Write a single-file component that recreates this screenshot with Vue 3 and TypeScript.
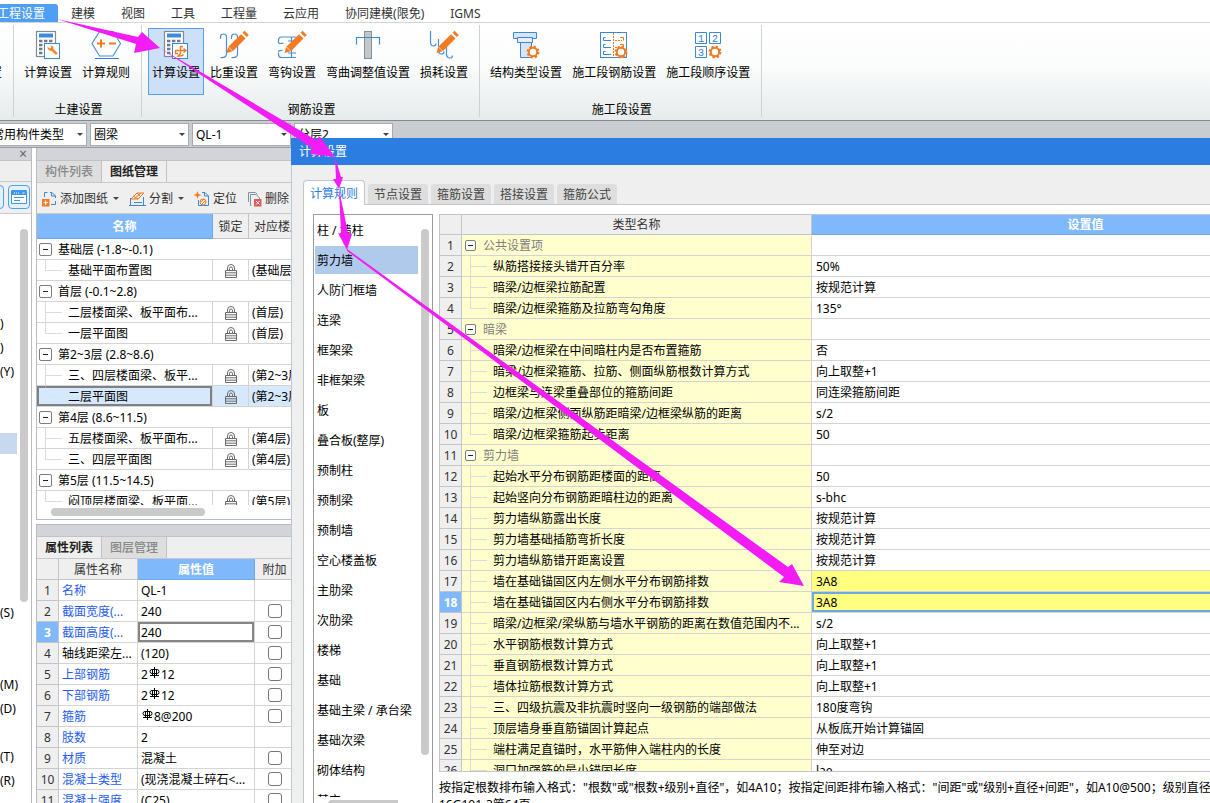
<script setup lang="ts">
import { ref } from 'vue'

interface TreeRow { kind: 'group' | 'leaf'; name: string; floor?: string; last?: boolean; active?: boolean }
interface PropRow { name: string; value: string; rebar?: 'mid' | 'start'; check: boolean; link: boolean; active?: boolean }
interface RuleRow { name: string; value: string; group?: boolean; last?: boolean; mark?: boolean; current?: boolean }

const menus: string[] = ['工程设置', '建模', '视图', '工具', '工程量', '云应用', '协同建模(限免)', 'IGMS']

const ribbon = [
  { label: '土建设置', items: [{ t: '计算设置', i: 'calcWrench' }, { t: '计算规则', i: 'rule' }] },
  {
    label: '钢筋设置',
    items: [
      { t: '计算设置', i: 'calcBar', on: true },
      { t: '比重设置', i: 'weight' },
      { t: '弯钩设置', i: 'hook' },
      { t: '弯曲调整值设置', i: 'bend' },
      { t: '损耗设置', i: 'loss' },
    ],
  },
  {
    label: '施工段设置',
    items: [{ t: '结构类型设置', i: 'struct' }, { t: '施工段钢筋设置', i: 'segment' }, { t: '施工段顺序设置', i: 'order' }],
  },
] as { label: string; items: { t: string; i: string; on?: boolean }[] }[]

const combos: { text: string; label: string }[] = [
  { text: '常用构件类型', label: '构件类型' },
  { text: '圈梁', label: '构件' },
  { text: 'QL-1', label: '名称' },
  { text: '分层2', label: '分层' },
]

const navRows: string[] = ['', '', '', '', ')', ')', '(Y)', '', '', '', '', '', '', '', '', '', '(S)', '', '', '(M)', '(D)', '', '(T)', '(R)']

const tree: TreeRow[] = [
  { kind: 'group', name: '基础层 (-1.8~-0.1)' },
  { kind: 'leaf', name: '基础平面布置图', floor: '(基础层)', last: true },
  { kind: 'group', name: '首层 (-0.1~2.8)' },
  { kind: 'leaf', name: '二层楼面梁、板平面布...', floor: '(首层)' },
  { kind: 'leaf', name: '一层平面图', floor: '(首层)', last: true },
  { kind: 'group', name: '第2~3层 (2.8~8.6)' },
  { kind: 'leaf', name: '三、四层楼面梁、板平...', floor: '(第2~3层)' },
  { kind: 'leaf', name: '二层平面图', floor: '(第2~3层)', last: true, active: true },
  { kind: 'group', name: '第4层 (8.6~11.5)' },
  { kind: 'leaf', name: '五层楼面梁、板平面布...', floor: '(第4层)' },
  { kind: 'leaf', name: '三、四层平面图', floor: '(第4层)', last: true },
  { kind: 'group', name: '第5层 (11.5~14.5)' },
  { kind: 'leaf', name: '闷顶层楼面梁、板平面...', floor: '(第5层)', last: true },
]

const props: PropRow[] = [
  { name: '名称', value: 'QL-1', check: false, link: true },
  { name: '截面宽度(...', value: '240', check: true, link: true },
  { name: '截面高度(...', value: '240', check: true, link: true, active: true },
  { name: '轴线距梁左...', value: '(120)', check: true, link: false },
  { name: '上部钢筋', value: '12', rebar: 'mid', check: true, link: true },
  { name: '下部钢筋', value: '12', rebar: 'mid', check: true, link: true },
  { name: '箍筋', value: '8@200', rebar: 'start', check: true, link: true },
  { name: '肢数', value: '2', check: false, link: true },
  { name: '材质', value: '混凝土', check: true, link: true },
  { name: '混凝土类型', value: '(现浇混凝土碎石<...', check: true, link: true },
  { name: '混凝土强度', value: '(C25)', check: true, link: true },
]

const dialogTabs: string[] = ['计算规则', '节点设置', '箍筋设置', '搭接设置', '箍筋公式']
const activeTab = ref(0)

const categories: string[] = [
  '柱 / 墙柱', '剪力墙', '人防门框墙', '连梁', '框架梁', '非框架梁', '板', '叠合板(整厚)', '预制柱', '预制梁',
  '预制墙', '空心楼盖板', '主肋梁', '次肋梁', '楼梯', '基础', '基础主梁 / 承台梁', '基础次梁', '砌体结构', '其它',
]
const activeCategory = ref(1)

const rules: RuleRow[] = [
  { name: '公共设置项', value: '', group: true },
  { name: '纵筋搭接接头错开百分率', value: '50%' },
  { name: '暗梁/边框梁拉筋配置', value: '按规范计算' },
  { name: '暗梁/边框梁箍筋及拉筋弯勾角度', value: '135°', last: true },
  { name: '暗梁', value: '', group: true },
  { name: '暗梁/边框梁在中间暗柱内是否布置箍筋', value: '否' },
  { name: '暗梁/边框梁箍筋、拉筋、侧面纵筋根数计算方式', value: '向上取整+1' },
  { name: '边框梁与连梁重叠部位的箍筋间距', value: '同连梁箍筋间距' },
  { name: '暗梁/边框梁侧面纵筋距暗梁/边框梁纵筋的距离', value: 's/2' },
  { name: '暗梁/边框梁箍筋起步距离', value: '50', last: true },
  { name: '剪力墙', value: '', group: true },
  { name: '起始水平分布钢筋距楼面的距离', value: '50' },
  { name: '起始竖向分布钢筋距暗柱边的距离', value: 's-bhc' },
  { name: '剪力墙纵筋露出长度', value: '按规范计算' },
  { name: '剪力墙基础插筋弯折长度', value: '按规范计算' },
  { name: '剪力墙纵筋错开距离设置', value: '按规范计算' },
  { name: '墙在基础锚固区内左侧水平分布钢筋排数', value: '3A8', mark: true },
  { name: '墙在基础锚固区内右侧水平分布钢筋排数', value: '3A8', mark: true, current: true },
  { name: '暗梁/边框梁/梁纵筋与墙水平钢筋的距离在数值范围内不...', value: 's/2' },
  { name: '水平钢筋根数计算方式', value: '向上取整+1' },
  { name: '垂直钢筋根数计算方式', value: '向上取整+1' },
  { name: '墙体拉筋根数计算方式', value: '向上取整+1' },
  { name: '三、四级抗震及非抗震时竖向一级钢筋的端部做法', value: '180度弯钩' },
  { name: '顶层墙身垂直筋锚固计算起点', value: '从板底开始计算锚固' },
  { name: '端柱满足直锚时，水平筋伸入端柱内的长度', value: '伸至对边' },
  { name: '洞口加强筋的最小锚固长度', value: 'lae' },
]
</script>

<template>
  <div class="app">
    <nav class="menu" aria-label="主菜单">
      <button v-for="(m, i) in menus" :key="m" type="button" :class="['menu-item', { on: i === 0 }]">{{ m }}</button>
    </nav>

    <header class="ribbon">
      <div class="stub"><span>置</span></div>
      <section v-for="g in ribbon" :key="g.label" class="group">
        <div class="group-items">
          <button v-for="b in g.items" :key="b.i" type="button" :class="['tool', { on: b.on }]">
            <svg width="30" height="30" viewBox="0 0 30 30" fill="none" aria-hidden="true">
              <template v-if="b.i === 'calcWrench' || b.i === 'calcBar'">
                <rect x="3.500" y="1.500" width="19" height="25" fill="#fff" stroke="#7c8b94" stroke-width="1.200" />
                <rect x="6" y="3.500" width="14" height="4" fill="#3d8be0" />
                <path d="M6 11h14M6 15h14M6 19h6M6 23h6" stroke="#6d7c86" stroke-width="2.600" stroke-dasharray="3.400 1.600" />
                <rect x="11.500" y="13.500" width="15" height="15" fill="#fff" stroke="#3d87d6" />
                <path v-if="b.i === 'calcWrench'" d="M14.500 16.500l2.300 2.300 1.800-1.900-1.300-1.300c2-.5 3.700 1 3.200 3.300l4.200 4.300-1.700 1.800-4.400-4.300c-2.300.5-4.500-1.500-4.100-4.200z" fill="#f0852a" />
                <g v-else stroke="#f27a22" stroke-width="1.400">
                  <path d="M19.500 16v7.500M19.500 16.500h2.500M14 20.500h10.500M14.500 20.500v3h2.500M19.500 23.500l-2.500 2.500h2.500" />
                  <path d="M22.500 18.500l2.500 2-2.500 2M22.500 24.500q-1 1.500-3 1.500" />
                </g>
              </template>
              <template v-else-if="b.i === 'rule'">
                <path d="M8.500 1.500h13.500l7.500 12-7.500 12.500H8.500l-7.500-12.500z" stroke="#4b8fdc" stroke-width="1.200" />
                <path d="M6 13.500h8M10 9.500v8M18 13.500h7" stroke="#f27a22" stroke-width="2" />
                <path d="M4 28.500h24" stroke="#2f80dc" />
              </template>
              <template v-else-if="b.i === 'weight'">
                <path d="M1.500 9V7q0-3 3-3t3 3v17q0 4-6 3.500M12.500 9V7q0-3 3-3t3 3v17q0 4-6 3.500" stroke="#4b8fdc" stroke-width="1.200" />
              </template>
              <template v-else-if="b.i === 'hook'">
                <path d="M1.500 13V10q0-3 3-3H19M19 27.500H4.500q-3 0-3-3v-2M1.500 22q0-2 4-1.500M1.500 13q2 1 5 0M14.500 7v20.500M11 11h8M11 23h8" stroke="#4b8fdc" stroke-width="1.200" />
              </template>
              <template v-else-if="b.i === 'bend'">
                <rect x="11.500" y="1.500" width="7" height="27" fill="#c3c7ca" stroke="#84919a" />
                <path d="M3.500 14.500v-7h23v7" stroke="#3d87d6" stroke-width="1.200" />
              </template>
              <template v-else-if="b.i === 'loss'">
                <path d="M1.500 1v11q0 4 3 4 2.500 0 2.500-2.500M9.500 9v11q0 4 3 4 2.500 0 2.500-2.500M17.500 12v12q0 4 3.500 4 2.500 0 2.500-2.500" stroke="#4b8fdc" stroke-width="1.200" />
              </template>
              <template v-else-if="b.i === 'struct'">
                <path d="M9.500 12.500h11v15h-11z" fill="#d6e6f8" stroke="#3d87d6" />
                <path d="M2.500 2.500h23v6h-23z" fill="#d6e6f8" stroke="#3d87d6" />
                <path d="M6.500 7.500h15v5h-15z" fill="#e4effb" stroke="#3d87d6" />
              </template>
              <template v-else-if="b.i === 'segment'">
                <rect x="1.500" y="2.500" width="26" height="25" stroke="#3d87d6" />
                <path d="M6.500 7.500H4.500v3H12M6.500 14.500H4.500v3H12M6.500 21.500H4.500v3H12" stroke="#3d87d6" />
                <path d="M14.500 3v24M16 10.500h7M16 17.500h5" stroke="#f27a22" stroke-dasharray="2 1" />
                <path d="M21 7.500h3.500v3M21 14.500h3.500v2" stroke="#f27a22" />
              </template>
              <template v-else-if="b.i === 'order'">
                <path d="M2.500 2.500h11v11h-11zM16.500 2.500h11v11h-11zM2.500 16.500h11v11h-11z" stroke="#3d87d6" />
                <text class="digit" x="5" y="12">1</text>
                <text class="digit" x="19" y="12">2</text>
                <text class="digit" x="5" y="26">3</text>
              </template>
              <g v-if="['weight', 'hook', 'loss'].includes(b.i)">
                <path d="M7.500 23l1.800-6.200L22 4.200l4.500 4.300L13.800 21.200z" fill="#f27a22" />
                <path d="M23.500 2.800l2-2 4.300 4.300-2 2z" fill="#f27a22" />
                <path d="M9.300 16.800l4.500 4.400" stroke="#fff" stroke-width=".7" />
              </g>
              <g v-if="['struct', 'segment', 'order'].includes(b.i)">
                <circle cx="22" cy="22" r="5.500" fill="#fff" stroke="#f27a22" stroke-width="2" stroke-dasharray="2.300 2.020" />
                <circle cx="22" cy="22" r="4.200" fill="#fff" stroke="#f27a22" stroke-width="2" />
              </g>
            </svg>
            <span>{{ b.t }}</span>
          </button>
        </div>
        <div class="group-label">{{ g.label }}</div>
      </section>
    </header>

    <div class="combos">
      <label v-for="c in combos" :key="c.label" class="combo">
        <select :aria-label="c.label"><option>{{ c.text }}</option></select>
      </label>
    </div>

    <main class="work">
      <aside class="nav">
        <div class="nav-top"><button type="button" class="close" aria-label="关闭">×</button></div>
        <div class="nav-gap"></div>
        <div class="nav-tools">
          <button type="button" class="view" aria-label="列表视图"></button>
          <button type="button" class="view" aria-label="窗口视图">
            <svg width="16" height="14" viewBox="0 0 16 14" aria-hidden="true">
              <path d="M.5.500h15v13H.500z" fill="#fff" stroke="#3f96ee" />
              <path d="M1 1h14v4H1z" fill="#3f96ee" />
              <path d="M3 3h1M5 3h1M7 3h1M11.500 3h2" stroke="#fff" />
              <path d="M3 7.500h10M3 10.500h6" stroke="#3f96ee" />
            </svg>
          </button>
        </div>
        <div class="nav-body">
          <ul class="nav-list">
            <li v-for="(n, i) in navRows" :key="i"><span :class="{ sel: i === 9 }">{{ n }}</span></li>
          </ul>
          <div class="vbar"></div>
        </div>
      </aside>

      <div class="dock">
        <section class="panel drawings">
          <div class="strip"></div>
          <div class="ptabs">
            <button type="button">构件列表</button>
            <button type="button" class="on">图纸管理</button>
          </div>
          <div class="ptools">
            <button type="button">
              <svg width="16" height="16" viewBox="0 0 16 16" fill="none" aria-hidden="true">
                <path d="M3.500 6V1.500h3M9 1.500h2l3.500 3.500v2M14.500 10v3.500H10M10.500 1.500V5h4" stroke="#3d87d6" />
                <rect x="1" y="8" width="7.500" height="7.500" fill="#f27a22" /><path d="M2.500 11.700h4.500M4.700 9.500V14" stroke="#fff" />
              </svg>
              添加图纸<i class="caret"></i>
            </button>
            <button type="button">
              <svg width="17" height="16" viewBox="0 0 17 16" fill="none" aria-hidden="true">
                <path d="M1.500 7v7.500h13V6M0 14.500h2M14 14.500h3M5 11.500h8" stroke="#3d87d6" />
                <path d="M2 8L8 2h7L9 8zM5 8l7-6M4 5l5 3M8 2l4 4" stroke="#f27a22" />
              </svg>
              分割<i class="caret"></i>
            </button>
            <button type="button">
              <svg width="16" height="16" viewBox="0 0 16 16" fill="none" aria-hidden="true">
                <path d="M8 1.500h3l3.500 3.500v9.500h-10V9M10.500 1.500V5h4" stroke="#3d87d6" />
                <path d="M3.500 0l1 3 3 1-3 1-1 3-1-3-3-1 3-1z" fill="#f27a22" />
                <circle cx="9" cy="11" r="3" stroke="#f27a22" /><path d="M7 11l3-3M8 13l3-3" stroke="#f27a22" />
              </svg>
              定位
            </button>
            <button type="button">
              <svg width="15" height="16" viewBox="0 0 15 16" fill="none" aria-hidden="true">
                <path d="M1.500 11V1.500h7l2 2M4.500 14.500h-1v-11h5.500l3.500 3.500v1" stroke="#8090a0" />
                <rect x="7" y="8" width="7.500" height="7.500" fill="#dd5b5b" /><path d="M9 10l3.500 3.500M12.500 10L9 13.500" stroke="#fff" />
              </svg>
              删除
            </button>
          </div>
          <div class="tree-wrap">
            <table class="grid tree">
              <colgroup><col class="w-name" /><col class="w-lock" /><col /></colgroup>
              <thead><tr><th class="hot">名称</th><th>锁定</th><th class="left">对应楼层</th></tr></thead>
              <tbody>
                <tr v-for="(r, i) in tree" :key="i" :class="{ active: r.active }">
                  <td v-if="r.kind === 'group'" colspan="3" class="flush"><div class="node"><i class="box big"></i><span>{{ r.name }}</span></div></td>
                  <template v-else>
                    <td class="flush"><div class="node"><i :class="['elbow', { last: r.last }]"></i><span>{{ r.name }}</span></div></td>
                    <td class="lock">
                      <svg width="12" height="14" viewBox="0 0 12 14" fill="none" stroke="#6a6a6a" aria-hidden="true">
                        <path d="M2.500 6.500V4q0-3.500 3.500-3.500T9.500 4v2.500M4.500 6.500V4.500Q4.500 3 6 3t1.500 1.500v2" />
                        <path d="M.5 6.500h11v7H.500zM.500 8.800h11M.500 11.200h11" />
                      </svg>
                    </td>
                    <td class="floor">{{ r.floor }}</td>
                  </template>
                </tr>
              </tbody>
            </table>
          </div>
          <div class="hbar-row"><div class="hbar"></div></div>
        </section>

        <section class="panel props">
          <div class="strip"></div>
          <div class="ptabs">
            <button type="button" class="on">属性列表</button>
            <button type="button">图层管理</button>
          </div>
          <table class="grid prop">
            <colgroup><col class="w-no" /><col class="w-key" /><col class="w-val" /><col /></colgroup>
            <thead><tr><th></th><th>属性名称</th><th class="hot">属性值</th><th>附加</th></tr></thead>
            <tbody>
              <tr v-for="(p, i) in props" :key="p.name" :class="{ cur: p.active }">
                <td class="no">{{ i + 1 }}</td>
                <td :class="['key', { link: p.link }]">{{ p.name }}</td>
                <td class="val">
                  <template v-if="p.rebar"><template v-if="p.rebar === 'mid'">2</template><svg class="rebar" width="13" height="12" viewBox="0 0 13 12" fill="none" stroke="#000" aria-hidden="true"><path d="M6.500 0v11M2 8.500h9M4 2.500h5q2 0 2 2t-2 2H4q-2 0-2-2t2-2zM4.500 2v6M8.500 2v6" /></svg></template>{{ p.value }}
                </td>
                <td class="add"><input v-if="p.check" type="checkbox" :aria-label="p.name + ' 附加'" /></td>
              </tr>
            </tbody>
          </table>
        </section>
      </div>
    </main>

    <section class="dialog" role="dialog" aria-labelledby="dlg-title">
      <h1 id="dlg-title" class="title">计算设置</h1>
      <div class="dtabs" role="tablist">
        <button v-for="(t, i) in dialogTabs" :key="t" type="button" role="tab" :aria-selected="i === activeTab" :class="{ on: i === activeTab }" @click="activeTab = i">{{ t }}</button>
      </div>
      <div class="pane">
        <div class="cats">
          <ul>
            <li v-for="(c, i) in categories" :key="c">
              <button type="button" :class="{ on: i === activeCategory }" @click="activeCategory = i">{{ c }}</button>
            </li>
          </ul>
          <div class="cats-v"></div>
          <div class="cats-h"></div>
        </div>
        <div class="right">
          <div class="rules-wrap">
            <table class="grid rules">
              <colgroup><col class="w-rno" /><col class="w-rname" /><col class="w-rval" /></colgroup>
              <thead><tr><th></th><th>类型名称</th><th class="hot">设置值</th></tr></thead>
              <tbody>
                <tr v-for="(r, i) in rules" :key="i" :class="{ cur: r.current }">
                  <td class="no">{{ i + 1 }}</td>
                  <td class="rname flush">
                    <div :class="['node', { grp: r.group }]"><i v-if="r.group" class="box"></i><i v-else :class="['elbow', { last: r.last }]"></i><span>{{ r.name }}</span></div>
                  </td>
                  <td :class="['rval', { mark: r.mark }]">{{ r.value }}</td>
                </tr>
              </tbody>
            </table>
          </div>
          <p class="hint">按指定根数排布输入格式："根数"或"根数+级别+直径"，如4A10；按指定间距排布输入格式："间距"或"级别+直径+间距"，如A10@500；级别直径<br />16G101-3第64页</p>
        </div>
      </div>
    </section>

    <svg class="arrows" width="820" height="600" viewBox="0 0 820 600" fill="#f31cf7" aria-hidden="true">
      <path d="M57 19L138 37 142 32 160 48 134 53 136 44z" />
      <path d="M160 48L289 124 316 140 320 137 335 157 310 154 312 148 277 125z" />
      <path d="M335 157L341 177 343 177 339 189 333 179 336 179z" />
      <path d="M339 189L348 233 352 234 347 250 338 233 341 234z" />
      <path d="M347 249L788 567 792 564 804 586 779 582 784 577 347 251z" />
    </svg>
  </div>
</template>

<style>
html, body { margin: 0; overflow: hidden; }
</style>

<style scoped>
.app { position: relative; display: flex; flex-direction: column; height: 100vh; overflow: hidden; background: #fff; color: #000; font: 12px/20px "Noto Sans", "Noto Sans CJK SC", sans-serif; }
.app *, .app *::before { box-sizing: border-box; }
button, select, input { font: inherit; color: inherit; margin: 0; }
button { border: 0; padding: 0; background: none; white-space: nowrap; }
ul, p, h1 { margin: 0; padding: 0; list-style: none; }

.menu { flex: none; display: flex; align-items: flex-end; height: 23px; margin-left: -16px; border-bottom: 1px solid #d5d5d5; color: #333; }
.menu-item { height: 18px; padding: 2px 13px 0; line-height: 16px; }
.menu-item.on { background: #4f9ff5; color: #fff; border-radius: 0 3px 0 0; }

.ribbon { flex: none; display: flex; height: 98px; padding-top: 2px; overflow: hidden; border-bottom: 1px solid #85898e; background: linear-gradient(#fff 0%, #fbfcfc 45%, #e6ebeb 100%); }
.stub { display: flex; justify-content: flex-end; width: 14px; height: 92px; padding: 38px 11px 0 0; border-right: 1px solid #cfd2d3; }
.group { display: flex; flex-direction: column; height: 92px; padding: 3px 7px 0 6px; border-right: 1px solid #cfd2d3; }
.group-items { display: flex; gap: 2px; height: 67px; }
.tool { display: flex; flex-direction: column; align-items: center; justify-content: flex-start; gap: 4px; height: 67px; padding: 1px 3px 0; border: 1px solid transparent; line-height: 18px; }
.tool svg { flex: none; }
.tool.on { border-color: #5a9fe8; background: #cce1f9; }
.group-label { margin-top: 6px; padding-left: 3px; text-align: center; line-height: 18px; }
.digit { font: 10px "Liberation Mono", monospace; fill: #2f80dc; }

.combos { flex: none; display: flex; gap: 3px; height: 27px; margin-left: -12px; padding-top: 2px; background: #c9ccd0; border-bottom: 1px solid #989ca1; }
.combo { position: relative; width: 99px; height: 23px; }
.combo select { display: block; width: 100%; height: 100%; padding: 0 3px; border: 1px solid #a7abb0; border-radius: 0; background: #fff; appearance: none; }
.combo::after { content: ""; position: absolute; right: 4px; top: 10px; border: 3px solid transparent; border-top-color: #444; border-bottom: 0; }

.work { flex: 1; display: flex; min-height: 0; }
.nav { flex: none; display: flex; flex-direction: column; width: 32px; overflow: hidden; border-right: 1px solid #b9bbc0; }
.nav-top { flex: none; display: flex; justify-content: flex-end; height: 13px; padding-right: 4px; background: #d2d4da; border-bottom: 1px solid #c0c2c8; }
.close { font-size: 14px; line-height: 12px; color: #666; }
.nav-gap { flex: none; height: 21px; background: #efefef; border-bottom: 1px solid #c8cacf; }
.nav-tools { flex: none; display: flex; gap: 4px; height: 32px; padding-top: 3px; margin-left: -18px; background: #efefef; border-bottom: 1px solid #c8cacf; }
.view { flex: none; display: flex; align-items: center; justify-content: center; width: 22px; height: 24px; border: 1px solid #4fa0f0; border-radius: 4px; background: #e3f0fd; }
.nav-body { flex: 1; display: flex; min-height: 0; padding-top: 2px; }
.nav-list { width: 17px; white-space: nowrap; line-height: 24px; }
.nav-list li { height: 24px; }
.nav-list span { display: block; height: 24px; line-height: 23px; }
.nav-list .sel { height: 21px; margin-top: 1px; background: #c8d8ef; }
.vbar { width: 8px; height: 373px; margin: 13px 0 0 3px; border-radius: 4px; background: #cacaca; }

.dock { flex: none; display: flex; flex-direction: column; gap: 4px; width: 259px; margin-left: 4px; }
.panel { display: flex; flex-direction: column; overflow: hidden; border-left: 1px solid #b9bbc0; }
.drawings { flex: 0 0 372px; border-bottom: 1px solid #b9bbc0; }
.props { flex: 1; min-height: 0; border-top: 1px solid #b9bbc0; }
.strip { flex: none; height: 13px; background: #d2d4da; border-bottom: 1px solid #c0c2c8; }
.props .strip { height: 12px; }
.ptabs { flex: none; display: flex; height: 22px; background: #efefef; border-bottom: 1px solid #c6c8cd; }
.ptabs button { height: 21px; padding: 1px 8px 0; line-height: 20px; border-right: 1px solid #c0c2c8; background: #dedede; color: #888; font-weight: 500; }
.ptabs .on { background: #efefef; color: #222; font-weight: 700; }
.ptools { flex: none; display: flex; gap: 10px; height: 31px; padding-left: 4px; background: #efefef; border-bottom: 1px solid #c6c8cd; color: #333; }
.ptools button { display: flex; align-items: center; gap: 3px; padding-top: 1px; }
.caret { margin-left: 2px; border: 3px solid transparent; border-top-color: #444; border-bottom: 0; }
.tree-wrap { flex: 1; min-height: 0; overflow: hidden; }
.hbar-row { flex: none; height: 14px; padding: 3px 0 0 14px; }
.hbar { width: 154px; height: 8px; border-radius: 4px; background: #cacaca; }

.grid { width: 100%; table-layout: fixed; border-spacing: 0; }
.grid th, .grid td { height: 21px; padding: 2px 0 0; overflow: hidden; white-space: nowrap; border-right: 1px solid #d4d4d4; border-bottom: 1px solid #d4d4d4; line-height: 18px; text-align: left; }
.grid td.flush { padding: 0; }
.grid th { background: #efefef; border-color: #c3c5ca; color: #333; font-weight: 400; text-align: center; }
.grid th.hot { background: #7fb9fb; border-color: #6aa9ef; color: #fff; font-weight: 700; }
.grid th.left { padding-left: 5px; text-align: left; }
.grid td.no { background: #efefef; border-color: #c3c5ca; color: #333; text-align: center; }
.grid .cur td.no { background: #7fb9fb; color: #fff; font-weight: 700; }
.w-name { width: 176px; }
.w-lock { width: 36px; }
.w-no { width: 22px; }
.w-key { width: 79px; }
.w-val { width: 117px; }
.w-rno { width: 22px; }
.w-rname { width: 350px; }
.w-rval { width: 548px; }
.tree th { height: 25px; }
.node { display: flex; align-items: center; height: 20px; overflow: hidden; }
.node span { padding-top: 2px; line-height: 18px; }
.elbow { flex: none; width: 17px; height: 20px; margin: 0 6px 0 8px; background: linear-gradient(#dcdcdc, #dcdcdc) 0 50% / 17px 1px no-repeat, linear-gradient(#dcdcdc, #dcdcdc) 0 0 / 1px 20px no-repeat; }
.elbow.last { background-size: 17px 1px, 1px 10px; }
.box { flex: none; display: flex; align-items: center; justify-content: center; width: 11px; height: 11px; margin: 0 7px 0 3px; border: 1px solid #7d7d7d; border-radius: 2px; background: #fff; }
.box::before { content: ""; width: 5px; height: 1px; background: #222; }
.box.big { width: 13px; height: 13px; margin: 0 6px 0 2px; }
.lock svg { display: block; margin: 0 auto; }
.grid td.floor { padding-left: 3px; }
.active td { background: #d5e8fc; }
.active td:first-child { box-shadow: inset 0 0 0 2px #7d8085; }
.active .elbow { opacity: .3; }

.grid td.key { padding-left: 3px; }
.grid td.link { color: #1f5cf0; }
.grid td.val { padding-left: 3px; }
.cur td.val { box-shadow: inset 0 0 0 2px #868686; }
.rebar { vertical-align: 0; }
.grid td.add { padding: 0; }
.add input { display: block; width: 14px; height: 14px; margin: 0 auto; appearance: none; border: 1px solid #777; border-radius: 3px; background: #fff; }

.dialog { position: absolute; left: 291px; top: 138px; right: 0; bottom: 0; display: flex; flex-direction: column; overflow: hidden; background: #efefef; box-shadow: inset 1px 0 #c0c6d8; }
.title { flex: none; height: 27px; padding-left: 8px; background: #2b7de1; color: #fff; font-size: 12px; font-weight: 400; line-height: 28px; }
.dtabs { flex: none; display: flex; align-items: flex-end; gap: 3px; height: 40px; margin-left: 12px; padding-top: 15px; background: linear-gradient(#c3c5cb, #c3c5cb) 0 100% / 100% 1px no-repeat; }
.dtabs button { height: 20px; margin-bottom: 1px; padding: 2px 6px 0; line-height: 18px; border-radius: 3px 3px 0 0; background: #dedede; color: #444; }
.dtabs .on { height: 25px; margin-bottom: 0; border: 1px solid #c3c5cb; border-bottom: 0; border-radius: 4px 4px 0 0; background: #fff; color: #2b7de1; }
.pane { flex: 1; display: flex; gap: 6px; min-height: 0; margin-left: 12px; padding: 9px 0 0 9px; border-left: 1px solid #c3c5cb; background: #fff; }
.cats { flex: none; position: relative; width: 120px; overflow: hidden; border: 1px solid #9b9b9b; border-bottom: 0; }
.cats ul { display: flex; flex-direction: column; gap: 2px; padding: 1px 0 0 1px; }
.cats li, .cats li button { display: block; width: 103px; height: 28px; text-align: left; }
.cats li button { padding: 2px 0 0 2px; line-height: 26px; }
.cats li .on { background: #b0caeb; }
.cats-v { position: absolute; right: 3px; top: 14px; width: 8px; height: 526px; border-radius: 4px; background: #cacaca; }
.cats-h { position: absolute; left: 0; right: 0; bottom: 0; height: 6px; background: radial-gradient(circle at 18px 7px, #cacaca 4px, transparent 4px), linear-gradient(#cacaca, #cacaca) 18px 3px / 66px 3px no-repeat, #fff; }
.right { flex: 1; display: flex; flex-direction: column; min-width: 0; overflow: hidden; }
.rules-wrap { flex: 1; min-height: 0; overflow: hidden; border: 1px solid #c3c5ca; border-right: 0; }
.rules { width: 920px; }
.grid.rules thead th { height: 20px; padding-top: 1px; }
.grid td.rname { background: #ffffce; }
.grp { color: #808080; }
.grid td.rval { padding-left: 4px; }
.grid td.mark { background: #ffff80; }
.cur td.rval { box-shadow: inset 0 0 0 2px #6ba8e8; }
.hint { flex: none; height: 31px; padding-top: 7px; white-space: nowrap; line-height: 17px; }

.arrows { position: absolute; left: 0; top: 0; pointer-events: none; }
</style>
